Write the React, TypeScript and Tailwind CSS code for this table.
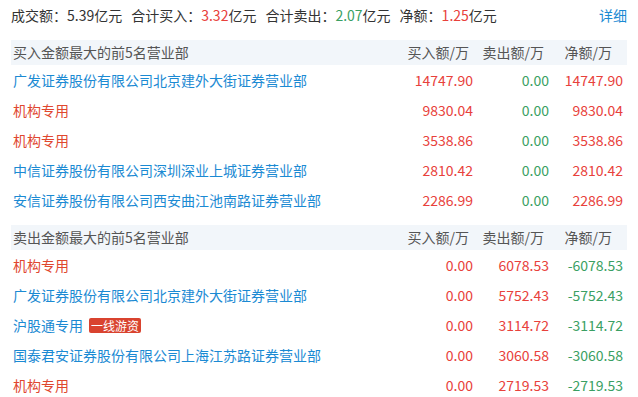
import React from 'react';

interface Row {
  name: string;
  buy: string;
  sell: string;
  net: string;
  inst?: boolean;
  tag?: string;
}

const buyRows: Row[] = [
  { name: '广发证券股份有限公司北京建外大街证券营业部', buy: '14747.90', sell: '0.00', net: '14747.90' },
  { name: '机构专用', buy: '9830.04', sell: '0.00', net: '9830.04', inst: true },
  { name: '机构专用', buy: '3538.86', sell: '0.00', net: '3538.86', inst: true },
  { name: '中信证券股份有限公司深圳深业上城证券营业部', buy: '2810.42', sell: '0.00', net: '2810.42' },
  { name: '安信证券股份有限公司西安曲江池南路证券营业部', buy: '2286.99', sell: '0.00', net: '2286.99' },
];

const sellRows: Row[] = [
  { name: '机构专用', buy: '0.00', sell: '6078.53', net: '-6078.53', inst: true },
  { name: '广发证券股份有限公司北京建外大街证券营业部', buy: '0.00', sell: '5752.43', net: '-5752.43' },
  { name: '沪股通专用', buy: '0.00', sell: '3114.72', net: '-3114.72', tag: '一线游资' },
  { name: '国泰君安证券股份有限公司上海江苏路证券营业部', buy: '0.00', sell: '3060.58', net: '-3060.58' },
  { name: '机构专用', buy: '0.00', sell: '2719.53', net: '-2719.53', inst: true },
];

const RED = 'text-[#e8413b]';
const GREEN = 'text-[#3a9f63]';

function numColor(v: string) {
  if (v === '0.00') return '';
  return v.startsWith('-') ? GREEN : RED;
}

function Section({ title, rows, sell }: { title: string; rows: Row[]; sell?: boolean }) {
  return (
    <div>
      <div className="grid h-[25px] grid-cols-[1fr_76px_76px_74px] items-center bg-[#f2f6fa] pl-[2px] pr-[4px] text-[#555]">
        <span>{title}</span>
        <span className="pr-[4px] text-right">买入额/万</span>
        <span className="pr-[5px] text-right">卖出额/万</span>
        <span className="pr-[11px] text-right">净额/万</span>
      </div>
      {rows.map((r, i) => (
        <div
          key={i}
          className="grid h-[30px] grid-cols-[1fr_76px_76px_74px] items-center pl-[2px] pr-[4px]"
        >
          <span className="flex items-center whitespace-nowrap">
            <span className={r.inst ? 'text-[#e0472f]' : 'text-[#1b8ad3]'}>{r.name}</span>
            {r.tag && (
              <span className="ml-[6px] rounded-[2px] bg-[#d9432f] px-[2px] text-[12px] leading-[15px] text-white">
                {r.tag}
              </span>
            )}
          </span>
          <span className={`text-right ${sell ? RED : numColor(r.buy)}`}>{r.buy}</span>
          <span className={`text-right ${sell ? numColor(r.sell) : GREEN}`}>{r.sell}</span>
          <span className={`text-right ${numColor(r.net)}`}>{r.net}</span>
        </div>
      ))}
    </div>
  );
}

export default function App() {
  return (
    <div
      className="h-[397px] w-[638px] overflow-hidden bg-white px-[11px] pt-[5px] text-[14px] text-[#333]"
      style={{ fontFamily: '"Noto Sans CJK SC", "Noto Sans", sans-serif' }}
    >
      <div className="flex h-[20px] items-center leading-[20px]">
        <span>成交额：5.39亿元</span>
        <span className="ml-[9px]">
          合计买入：<span className={RED}>3.32</span>亿元
        </span>
        <span className="ml-[9px]">
          合计卖出：<span className={GREEN}>2.07</span>亿元
        </span>
        <span className="ml-[9px]">
          净额：<span className={RED}>1.25</span>亿元
        </span>
        <span className="ml-auto text-[#1b8ad3]">详细</span>
      </div>
      <div className="mt-[15px]">
        <Section title="买入金额最大的前5名营业部" rows={buyRows} />
      </div>
      <div className="mt-[10px]">
        <Section title="卖出金额最大的前5名营业部" rows={sellRows} sell />
      </div>
    </div>
  );
}
